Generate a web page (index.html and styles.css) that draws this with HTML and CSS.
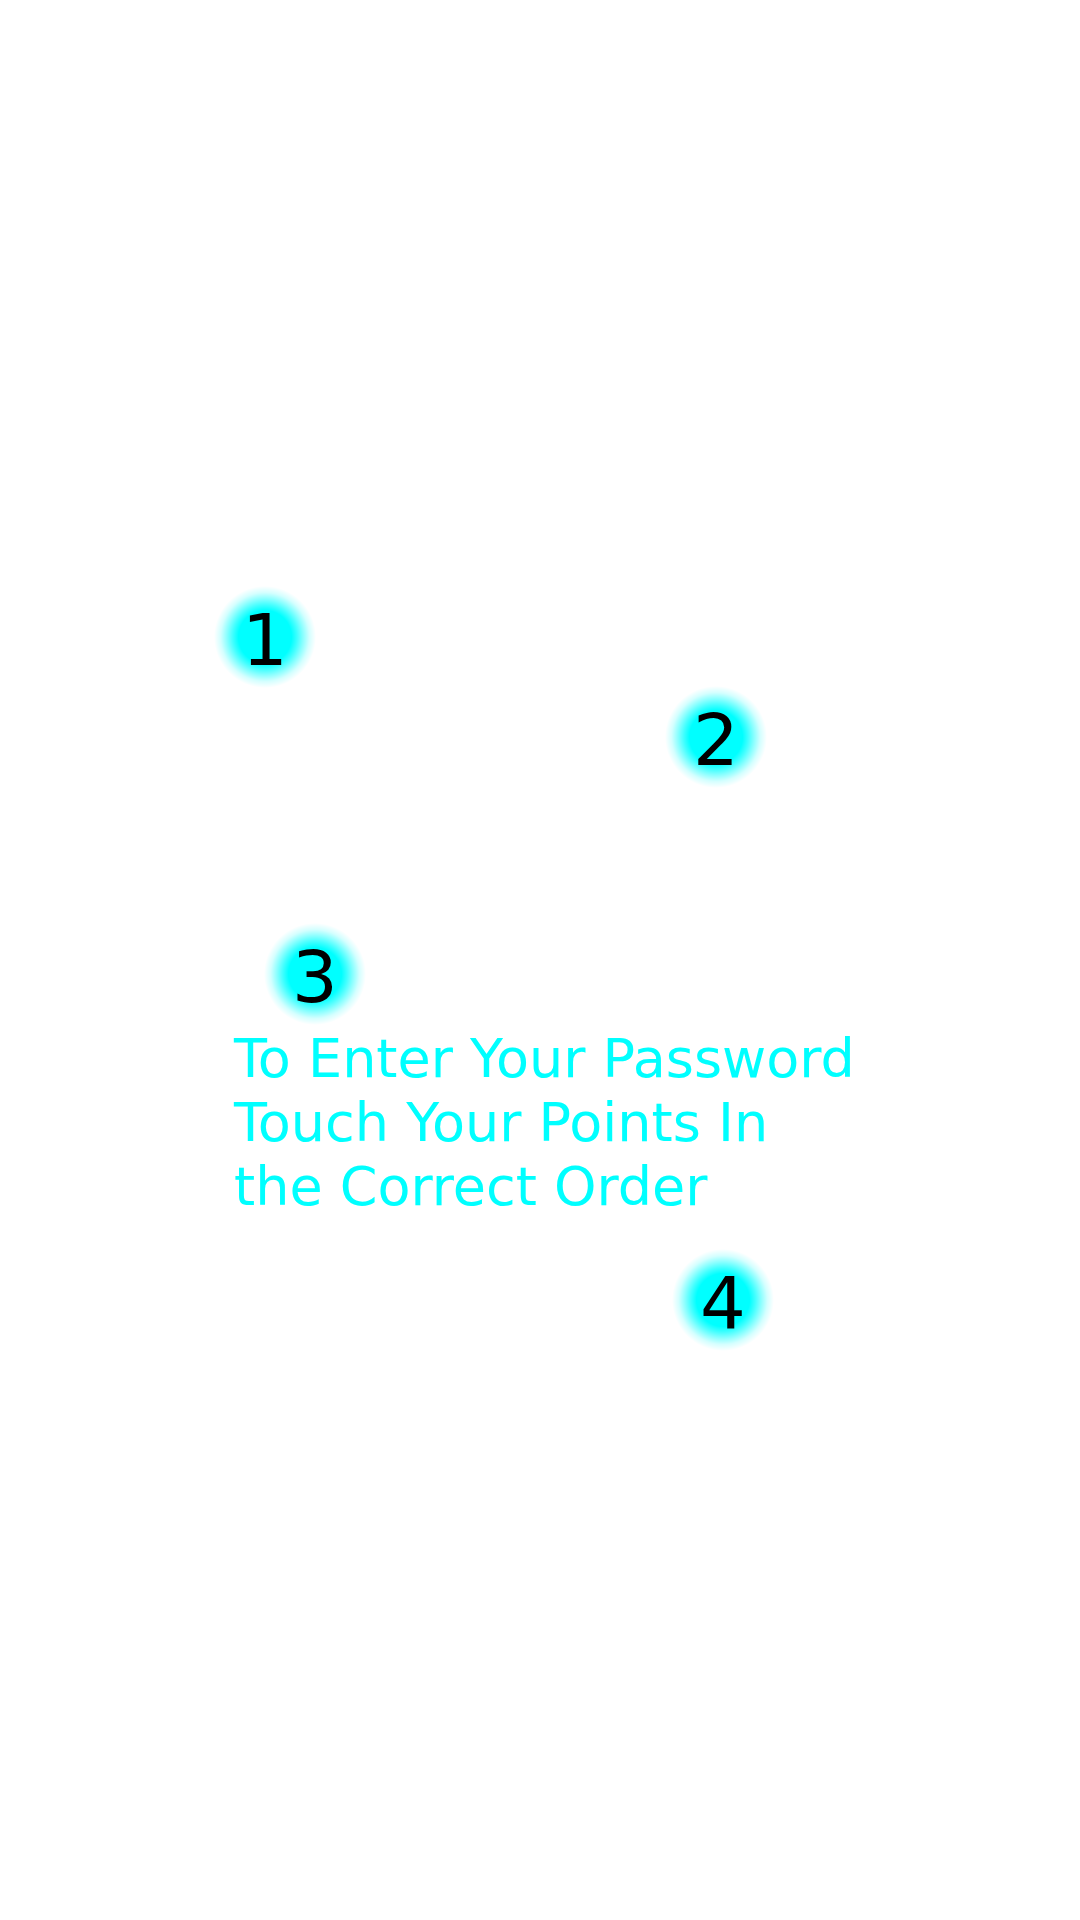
FILE: index.html
```html
<!DOCTYPE html>
<html>
<head>
<meta charset="utf-8">
<link rel="stylesheet" href="styles.css">
</head>
<body>
<div class="canvas">
  <div class="point p1"><span>1</span></div>
  <div class="point p2"><span>2</span></div>
  <div class="point p3"><span>3</span></div>
  <div class="point p4"><span>4</span></div>
  <p class="hint">To Enter Your Password<br>Touch Your Points In<br>the Correct Order</p>
</div>
</body>
</html>
```
FILE: styles.css
```css
html, body {
  margin: 0;
  padding: 0;
  background: #ffffff;
}
.canvas {
  position: relative;
  width: 1080px;
  height: 1920px;
  font-family: "DejaVu Sans", sans-serif;
  padding: 1027px 0 0 234px;
  box-sizing: border-box;
}
.hint {
  margin: 0;
  color: #00ffff;
  font-size: 54px;
  line-height: 64px;
}
.point {
  position: absolute;
  width: 102px;
  height: 102px;
  margin: -51px 0 0 -51px;
  border-radius: 50%;
  background: radial-gradient(circle closest-side,
    #00ffff 0%,
    #00ffff 52%,
    rgba(0,255,255,0.75) 63%,
    rgba(0,255,255,0.45) 75%,
    rgba(0,255,255,0.17) 87%,
    rgba(0,255,255,0) 100%);
  display: flex;
  align-items: center;
  justify-content: center;
}
.point span {
  font-size: 72px;
  line-height: 1;
  color: #000;
  position: relative;
  top: 3px;
}
.p1 { left: 265px; top: 637px; }
.p2 { left: 716px; top: 737px; }
.p3 { left: 315px; top: 974px; }
.p4 { left: 723px; top: 1300px; }
```
